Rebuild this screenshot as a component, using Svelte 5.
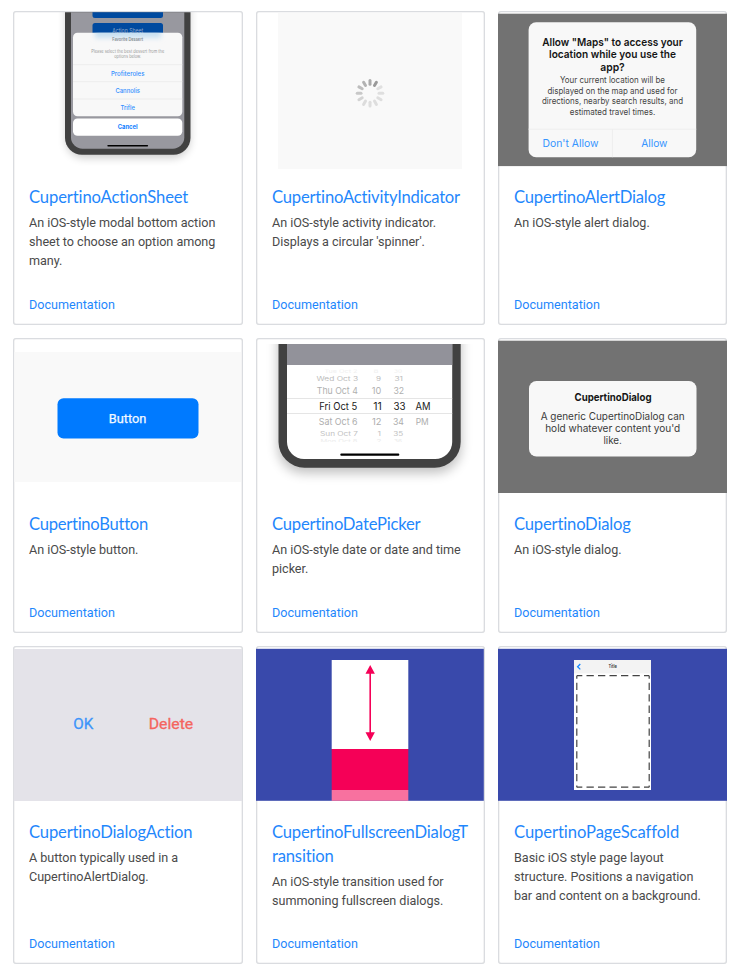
<script>
  const rows = [
    {
      height: 314,
      top: 11,
      cards: [
        { art: 'sheet', spacing: -0.12, title: ['CupertinoActionSheet'], text: ['An iOS-style modal bottom action', 'sheet to choose an option among', 'many.'] },
        { art: 'spinner', spacing: -0.19, title: ['CupertinoActivityIndicator'], text: ['An iOS-style activity indicator.', "Displays a circular 'spinner'."] },
        { art: 'alert', spacing: -0.2, title: ['CupertinoAlertDialog'], text: ['An iOS-style alert dialog.'] }
      ]
    },
    {
      height: 295,
      top: 338,
      cards: [
        { art: 'button', spacing: -0.27, title: ['CupertinoButton'], text: ['An iOS-style button.'] },
        { art: 'picker', spacing: -0.2, title: ['CupertinoDatePicker'], text: ['An iOS-style date or date and time', 'picker.'] },
        { art: 'dialog', spacing: -0.17, title: ['CupertinoDialog'], text: ['An iOS-style dialog.'] }
      ]
    },
    {
      height: 318,
      top: 646,
      cards: [
        { art: 'action', spacing: -0.16, title: ['CupertinoDialogAction'], text: ['A button typically used in a', 'CupertinoAlertDialog.'] },
        { art: 'transition', spacing: -0.18, title: ['CupertinoFullscreenDialogT', 'ransition'], text: ['An iOS-style transition used for', 'summoning fullscreen dialogs.'] },
        { art: 'scaffold', spacing: -0.07, title: ['CupertinoPageScaffold'], text: ['Basic iOS style page layout', 'structure. Positions a navigation', 'bar and content on a background.'] }
      ]
    }
  ];
  const columns = [{ x: 13, width: 230 }, { x: 256, width: 229 }, { x: 498, width: 229 }];
  const spokes = ['#aaa', '#999', '#e0e0e0', '#dfdfdf', '#dedede', '#dedede', '#dedede', '#dcdcdc', '#d3d3d3', '#c8c8c8', '#bdbdbd', '#b2b2b2'];
</script>

{#snippet label(x, y, size, width, value, fill, weight = 400, anchor = 'middle')}
  <text {x} {y} {fill} font-size={size} font-weight={weight} text-anchor={anchor} textLength={width} lengthAdjust="spacingAndGlyphs">{value}</text>
{/snippet}

{#snippet art(kind)}
  {#if kind === 'sheet'}
    <defs>
      <filter id="soft" x="-20%" y="-20%" width="140%" height="140%"><feGaussianBlur stdDeviation="4" /></filter>
      <filter id="glow" x="-20%" y="-60%" width="140%" height="220%"><feGaussianBlur stdDeviation="2.5" /></filter>
      <clipPath id="sheetTop"><rect x="20" y="12.2" width="215" height="157" /></clipPath>
      <clipPath id="sheetPanel"><rect x="73" y="32.7" width="109.3" height="83.5" rx="4.5" /></clipPath>
    </defs>
    <g clip-path="url(#sheetTop)">
      <rect x="66" y="-20" width="124" height="178" rx="18" fill="#000" opacity=".2" filter="url(#soft)" />
      <rect x="65" y="-20" width="125.5" height="174.7" rx="17" fill="#414141" />
      <rect x="71" y="-20" width="113.3" height="168.7" rx="11.5" fill="#98989f" />
      <rect x="92.5" y="5" width="70.5" height="13" rx="2.5" fill="#004a9f" />
      <rect x="92.5" y="23" width="70.5" height="18" rx="2.5" fill="#004a9f" />
      {@render label(127.7, 33.2, 6, 31, 'Action Sheet', '#8fa7c8')}
      <rect x="73" y="32.7" width="109.3" height="83.5" rx="4.5" fill="#f8f8f8" />
      <g clip-path="url(#sheetPanel)"><rect x="95" y="28" width="66" height="10" fill="#c7e0f2" filter="url(#glow)" /></g>
      {@render label(127.7, 41.2, 4.6, 31, 'Favorite Dessert', '#858b90', 600)}
      {@render label(127.7, 52.6, 4.5, 73, 'Please select the best dessert from the', '#9a9a9a')}
      {@render label(127.7, 57.5, 4.5, 27, 'options below.', '#9a9a9a')}
      <path d="M73 64.7h109.3M73 81.7h109.3M73 99h109.3" stroke="#e9e9e9" stroke-width=".8" />
      {@render label(127.7, 75.9, 6.4, 33.5, 'Profiteroles', '#328fff', 500)}
      {@render label(127.7, 92.8, 6.4, 24.5, 'Cannolis', '#328fff', 500)}
      {@render label(127.7, 110, 6.4, 14.5, 'Trifle', '#328fff', 500)}
      <rect x="73" y="118.5" width="109.3" height="17.3" rx="4.5" fill="#fff" />
      {@render label(127.7, 129.4, 6.4, 20, 'Cancel', '#1682ff', 700)}
      <rect x="107.3" y="145" width="40.8" height="1.5" rx=".75" fill="#000" />
    </g>
  {:else if kind === 'spinner'}
    <rect x="278" y="13" width="184" height="156.3" fill="#f9f9f9" />
    {#each spokes as tone, i}
      <path d="M370 84.3v-3.8" stroke={tone} stroke-width="3" stroke-linecap="round" transform="rotate({i * 30} 370 93.3)" />
    {/each}
  {:else if kind === 'alert'}
    <rect x="498" y="13.7" width="229" height="152.4" fill="#727272" />
    <rect x="528.6" y="22.2" width="167.6" height="135" rx="7.5" fill="#f8f8f8" />
    {@render label(612.5, 45.6, 11, 140.5, 'Allow "Maps" to access your', '#151515', 600)}
    {@render label(612.5, 58.4, 11, 127, 'location while you use the', '#151515', 600)}
    {@render label(612.5, 71.2, 11, 24.5, 'app?', '#151515', 600)}
    {@render label(612.5, 83.1, 8.6, 105, 'Your current location will be', '#444')}
    {@render label(612.5, 93.6, 8.6, 130, 'displayed on the map and used for', '#444')}
    {@render label(612.5, 104.2, 8.6, 141, 'directions, nearby search results, and', '#444')}
    {@render label(612.5, 114.6, 8.6, 85.5, 'estimated travel times.', '#444')}
    <path d="M528.6 129.2h167.6M612.4 129.2v28" stroke="#eee" stroke-width="1" />
    {@render label(570.5, 147.2, 10.8, 56, "Don't Allow", '#3695ff')}
    {@render label(654.3, 147.2, 10.8, 26.3, 'Allow', '#3695ff')}
  {:else if kind === 'button'}
    <rect x="14.5" y="352" width="226.5" height="130" fill="#f9f9f9" />
    <rect x="57.5" y="398.2" width="141" height="40.2" rx="6" fill="#007aff" />
    <g class="roboto" stroke="#f2f8ff" stroke-width=".25">{@render label(127.5, 422.6, 12, 37.5, 'Button', '#f2f8ff')}</g>
  {:else if kind === 'picker'}
    <defs>
      <filter id="phoneShade" x="-20%" y="-20%" width="140%" height="140%"><feGaussianBlur stdDeviation="6" /></filter>
      <clipPath id="pickerTop"><rect x="258" y="344" width="225" height="151" /></clipPath>
      <clipPath id="screen"><rect x="287" y="300" width="165.2" height="159" rx="17" /></clipPath>
      <clipPath id="rowTop"><rect x="300" y="369.5" width="130" height="4" /></clipPath>
      <clipPath id="rowEnd"><rect x="300" y="438.5" width="130" height="3.5" /></clipPath>
    </defs>
    <g clip-path="url(#pickerTop)">
      <rect x="278" y="310" width="183" height="163" rx="26" opacity=".25" filter="url(#phoneShade)" />
      <rect x="278.5" y="300" width="182.2" height="167.7" rx="26" fill="#414141" />
      <g clip-path="url(#screen)">
        <rect x="287" y="340" width="166" height="120" fill="#fff" />
        <rect x="287" y="340" width="166" height="25" fill="#92929a" />
      </g>
      <path d="M287 398.5h165.2M287 413.5h165.2" stroke="#dedede" stroke-width=".8" />
      <g clip-path="url(#rowTop)">
        {@render label(341, 373, 5, 33, 'Tue Oct 2', '#f0f0f0')}
        {@render label(376, 373, 5, 5, '8', '#f0f0f0')}
        {@render label(398, 373, 5, 8, '30', '#f0f0f0')}
      </g>
      <g transform="translate(0 381.1) scale(1 .67)">
        {@render label(337.3, 0, 9, 41.5, 'Wed Oct 3', '#bcbcbc')}
        {@render label(378.6, 0, 9, 5, '9', '#bcbcbc')}
        {@render label(398.7, 0, 9, 8.5, '31', '#bcbcbc')}
      </g>
      {@render label(337.3, 394.2, 9.2, 41, 'Thu Oct 4', '#b0b0b0')}
      {@render label(376.5, 394.2, 9.2, 9.5, '10', '#b0b0b0')}
      {@render label(398.8, 394.2, 9.2, 10.7, '32', '#b0b0b0')}
      {@render label(338.3, 409.9, 10.4, 38, 'Fri Oct 5', '#222')}
      {@render label(377.6, 409.9, 10.4, 8.5, '11', '#222')}
      {@render label(399.6, 409.9, 10.4, 12, '33', '#222')}
      {@render label(423, 409.9, 10.4, 15, 'AM', '#222')}
      {@render label(338.2, 424.8, 9.2, 38.7, 'Sat Oct 6', '#adadad')}
      {@render label(376.8, 424.8, 9.2, 9.5, '12', '#adadad')}
      {@render label(398.4, 424.8, 9.2, 11, '34', '#adadad')}
      {@render label(422.2, 424.8, 9.2, 13, 'PM', '#adadad')}
      <g transform="translate(0 435.7) scale(1 .62)">
        {@render label(339, 0, 9, 38, 'Sun Oct 7', '#c2c2c2')}
        {@render label(379.2, 0, 9, 3.5, '1', '#c2c2c2')}
        {@render label(398.2, 0, 9, 10, '35', '#c2c2c2')}
      </g>
      <g clip-path="url(#rowEnd)">
        {@render label(339, 442.5, 5, 37, 'Mon Oct 8', '#ececec')}
        {@render label(379, 442.5, 5, 5, '2', '#ececec')}
        {@render label(398, 442.5, 5, 8, '36', '#ececec')}
      </g>
      <rect x="340.3" y="453.6" width="59" height="2.2" rx="1" fill="#000" />
    </g>
  {:else if kind === 'dialog'}
    <rect x="498" y="340.7" width="229" height="152.3" fill="#727272" />
    <rect x="529" y="381" width="167.5" height="75.5" rx="7.5" fill="#f8f8f8" />
    {@render label(613, 401, 10.6, 77, 'CupertinoDialog', '#151515', 700)}
    {@render label(612.7, 419.5, 10.4, 144, 'A generic CupertinoDialog can', '#3b3b3b')}
    {@render label(612.7, 432, 10.4, 135, "hold whatever content you'd", '#3b3b3b')}
    {@render label(612.7, 444.2, 10.4, 18.5, 'like.', '#3b3b3b')}
  {:else if kind === 'action'}
    <rect x="13.7" y="649" width="228.3" height="152" fill="#e4e3e9" />
    <g class="roboto" stroke-width=".3">
      <g stroke="#3d95fa">{@render label(83.3, 729.4, 14.5, 20, 'OK', '#3d95fa')}</g>
      <g stroke="#f4655f">{@render label(171, 729.4, 14.5, 44.5, 'Delete', '#f4655f')}</g>
    </g>
  {:else if kind === 'transition'}
    <rect x="256" y="648.8" width="227.8" height="152" fill="#3949ab" />
    <rect x="331.7" y="660" width="76.6" height="89" fill="#fff" />
    <rect x="331.7" y="749" width="76.6" height="41" fill="#f50057" />
    <rect x="331.7" y="790" width="76.6" height="10.8" fill="#f8719f" />
    <path d="M370.2 670v66" stroke="#f50057" stroke-width="1.6" />
    <path d="M370.2 665l4.7 8.8h-9.4zM370.2 741l4.7-8.8h-9.4z" fill="#f50057" />
  {:else}
    <rect x="498" y="648.8" width="229" height="152" fill="#3949ab" />
    <rect x="574" y="660" width="77" height="130" fill="#fff" />
    <rect x="574" y="660" width="77" height="13.4" fill="#f3f3f3" />
    <path d="M580.3 664l-2.7 2.7 2.7 2.7" fill="none" stroke="#1686ff" stroke-width="1.3" />
    {@render label(612.6, 668.2, 5.2, 8.4, 'Title', '#333', 600)}
    <path d="M576.8 675.7h72.4" fill="none" stroke="#444" stroke-width="1.2" stroke-dasharray="7.3 4.2" stroke-dashoffset="1.8" />
    <path d="M576.8 787.2h72.4" fill="none" stroke="#444" stroke-width="1.2" stroke-dasharray="7.3 4.2" stroke-dashoffset="1.8" />
    <path d="M576.8 675.7v111.5M649.2 675.7v111.5" fill="none" stroke="#444" stroke-width="1.2" stroke-dasharray="7.3 4.1" stroke-dashoffset="4.3" />
  {/if}
{/snippet}

<main>
  {#each rows as row}
    <section style="height: {row.height}px">
      {#each row.cards as card, i}
        <article>
          <svg class="media" viewBox="{columns[i].x} {row.top} {columns[i].width} 158" aria-hidden="true">{@render art(card.art)}</svg>
          <div class="body">
            <h2 style="letter-spacing: {card.spacing}px">{#each card.title as line}<span>{line}</span>{/each}</h2>
            <p>{#each card.text as line}<span>{line}</span>{/each}</p>
            <a href="#{card.art}">Documentation</a>
          </div>
        </article>
      {/each}
    </section>
  {/each}
</main>

<style>
  :global(body) { margin: 0; background: #fff; }
  main {
    box-sizing: border-box;
    width: 740px;
    height: 968px;
    padding: 11px 13px 0;
    display: flex;
    flex-direction: column;
    gap: 13px;
    overflow: hidden;
    font-family: Roboto, sans-serif;
  }
  section { display: flex; gap: 13px; flex: none; }
  article {
    display: flex;
    flex-direction: column;
    width: 229px;
    flex: none;
    border-radius: 3px;
    box-shadow: inset 0 0 0 1px #dadce0, inset 0 0 0 1.6px #ececed;
  }
  article:first-child { width: 230px; }
  .media { display: block; width: 100%; height: 158px; flex: none; font-family: Inter, sans-serif; }
  .roboto { font-family: Roboto, sans-serif; }
  .body { flex: 1; display: flex; flex-direction: column; padding: 16px 12px 11px 16px; }
  h2 { margin: 0 0 4px; font: 400 16.6px/24px Lato, sans-serif; color: #1f87fc; white-space: nowrap; }
  h2 span, p span { display: block; }
  p { margin: 0; font-size: 12.6px; line-height: 19px; letter-spacing: -.03px; color: #4a4a4a; white-space: nowrap; }
  a { margin-top: auto; align-self: flex-start; font-size: 12.6px; line-height: 19px; color: #1f87fc; text-decoration: none; }
</style>
